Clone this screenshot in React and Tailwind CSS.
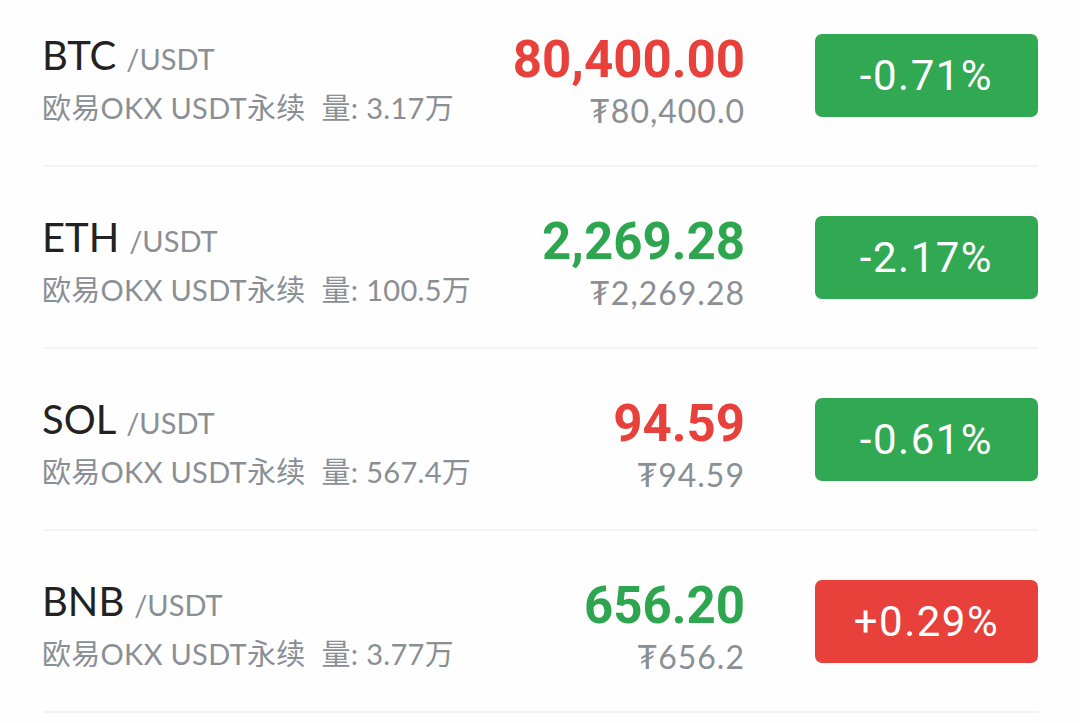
import React from "react";

const rows = [
  { sym: "BTC", vol: "3.17万", price: "80,400.00", up: true, sub: "₮80,400.0", chg: "-0.71%", chgUp: false },
  { sym: "ETH", vol: "100.5万", price: "2,269.28", up: false, sub: "₮2,269.28", chg: "-2.17%", chgUp: false },
  { sym: "SOL", vol: "567.4万", price: "94.59", up: true, sub: "₮94.59", chg: "-0.61%", chgUp: false },
  { sym: "BNB", vol: "3.77万", price: "656.20", up: false, sub: "₮656.2", chg: "+0.29%", chgUp: true },
];

const geo = { fontFamily: "Lato, 'Noto Sans CJK SC', 'DejaVu Sans', sans-serif" };
const rob = { fontFamily: "Roboto, 'Noto Sans', sans-serif" };

export default function App() {
  return (
    <div className="w-[1080px] h-[723px] overflow-hidden bg-[#fefefe]">
      <div className="-mt-[15px] pl-[44px] pr-[42px]">
        {rows.map((r) => (
          <div key={r.sym} className="h-[182px] flex items-start border-b-2 border-[#f3f3f3]">
            <div className="flex-1 min-w-0 -ml-[2px] pt-[46px] flex flex-col whitespace-nowrap" style={geo}>
              <div className="flex items-baseline text-[#222222]">
                <span className="text-[40px] leading-[48px]">{r.sym}</span>
                <span className="ml-[10px] text-[29px] leading-[40px] text-[#8a8f94]">/USDT</span>
              </div>
              <div className="mt-[11px] text-[29px] leading-[36px] text-[#8a8f94] tracking-[0.3px]">
                欧易OKX USDT永续<span className="ml-[16px]">量: {r.vol}</span>
              </div>
            </div>
            <div className="w-[300px] pt-[46px] flex flex-col items-end whitespace-nowrap">
              <div
                className={`text-[51px] leading-[58px] font-bold ${r.up ? "text-[#e8413b]" : "text-[#2ea64f]"}`}
                style={rob}
              >
                {r.price}
              </div>
              <div className="mt-[4px] text-[32px] leading-[36px] tracking-[1px] text-[#8a8f94]" style={geo}>
                {r.sub}
              </div>
            </div>
            <div
              className={`self-center ml-[70px] w-[223px] h-[83px] rounded-[7px] flex items-center justify-center text-white text-[42px] tracking-[1.5px] ${r.chgUp ? "bg-[#e8403a]" : "bg-[#31a852]"}`}
              style={rob}
            >
              {r.chg}
            </div>
          </div>
        ))}
      </div>
    </div>
  );
}
